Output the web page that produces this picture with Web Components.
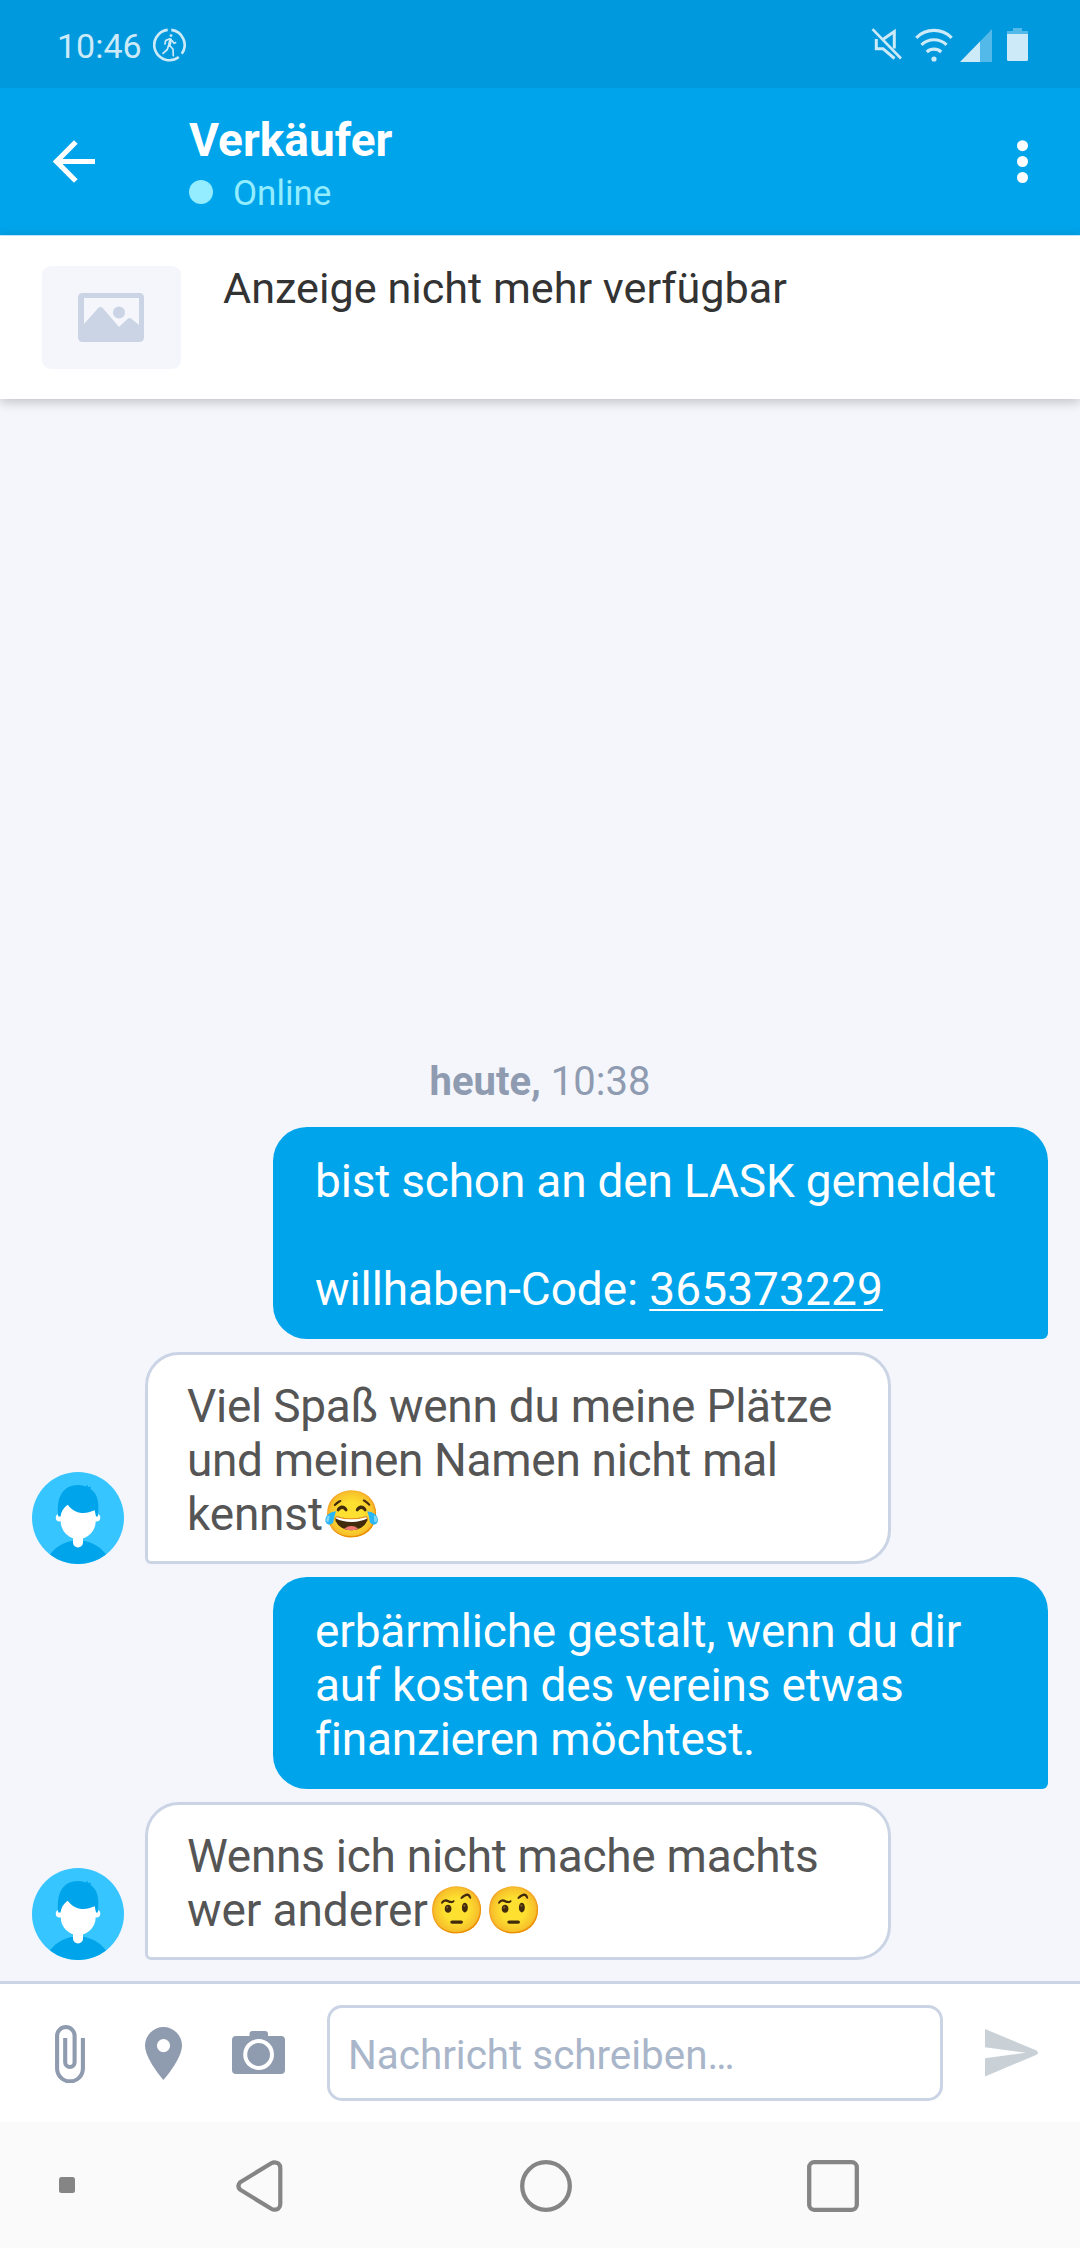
<!DOCTYPE html>
<html lang="de">
<head>
<meta charset="utf-8">
<title>Verkäufer</title>
<style>
html,body{margin:0;padding:0}
body{width:1080px;height:2248px;overflow:hidden;font-family:Roboto,"Noto Sans",sans-serif;background:#f4f6fc}
</style>
</head>
<body>
<chat-screen></chat-screen>
<script>
const define = (name, html) => customElements.define(name, class extends HTMLElement {
  constructor() {
    super();
    const t = document.createElement('template');
    t.innerHTML = '<style>*{box-sizing:border-box}svg{display:block;flex:none}</style>' + html;
    this.attachShadow({mode: 'open'}).append(t.content.cloneNode(true));
  }
});

define('status-bar', `
<style>
:host{display:flex;align-items:flex-start;height:88px;flex:none;background:#0099dd;color:#cceaf8;padding:0 52px 0 57px;box-sizing:border-box}
.time{font-size:34px;line-height:40px;padding-top:26px;width:96px}
.icons{display:flex;margin-left:auto;padding-top:28px}
.run{margin-top:28px}
</style>
<span class="time">10:46</span>
<svg class="run" width="33" height="34" viewBox="0 0 33 34" fill="none" stroke="#cceaf8">
<path stroke-width="2.6" d="M18.3 1.9A15.2 15.2 0 0 1 28.8 25.8M25.8 29A15.2 15.2 0 1 1 14.7 1.9"/>
<circle cx="18" cy="7.6" r="1.4" fill="#cceaf8" stroke="none"/>
<path stroke-width="1.7" stroke-linejoin="round" stroke-linecap="round" d="M16.7 10.8L12.6 12.6L12 16M19.2 12.8L21 15.3L22.6 14.6M15.4 18L14.3 21.5L10 25.4M17 17.8L20 21.3L20.3 27.7"/>
<path stroke-width="3" stroke-linecap="round" d="M17.6 11.8L16.2 17.5"/>
</svg>
<div class="icons">
<svg width="33" height="34" viewBox="0 0 33 34" fill="none" stroke="#cceaf8">
<path stroke-width="2.600" d="M1.500 1.200L30 30.500"/><path stroke-width="3" d="M5.300 11V20.700H12L23.500 30.500M12.500 11L23.300 3.500V20.500"/>
</svg>
<svg style="margin-left:11px" width="38" height="34" viewBox="0 0 38 34" fill="none" stroke="#cceaf8" stroke-width="3.200">
<path d="M1.300 9.800A25 25 0 0 1 36.700 9.800M6.500 16.800A18 18 0 0 1 31.500 16.800M11.800 24A10.500 10.500 0 0 1 26.200 24"/><circle cx="19" cy="31" r="2.600" fill="#cceaf8" stroke="none"/>
</svg>
<svg style="margin-left:7px" width="32" height="34" viewBox="0 0 32 34"><path fill="#52b9e8" d="M32 1V34.500H0z"/><path fill="#cceaf8" d="M20 13.500V34H0z"/></svg>
<svg style="margin-left:15px" width="21" height="34" viewBox="0 0 21 34"><path fill="#52b9e8" d="M6 0H15V3H21V6H0V3H6z"/><path fill="#cceaf8" d="M0 6H21V31.500Q21 33 19.500 33H1.500Q0 33 0 31.500z"/></svg>
</div>`);

define('app-bar', `
<style>
:host{display:flex;height:147px;flex:none;background:#00a4eb;color:#fff;padding:0 52px 0 53px;box-sizing:border-box}
.back{margin-top:52px}
.who{margin-left:94px;padding-top:25px}
.name{font-size:46px;line-height:54px;font-weight:700;white-space:nowrap}
.state{display:flex;align-items:center;gap:20px;font-size:35px;line-height:42px;color:#93edff;margin-top:6px}
.dot{width:24px;height:24px;border-radius:50%;background:#93edff;margin-top:-4px}
.more{margin:52px 0 0 auto}
</style>
<svg class="back" width="42" height="43" viewBox="0 0 42 43" fill="none" stroke="#fff" stroke-width="5.200"><path d="M42 21.500H5M22.800 2L3.500 21.500L22.800 41"/></svg>
<div class="who"><div class="name"><slot name="name"></slot></div><div class="state"><span class="dot"></span><slot name="state"></slot></div></div>
<svg class="more" width="11" height="44" viewBox="0 0 11 44" fill="#fff"><circle cx="5.500" cy="5.700" r="5.500"/><circle cx="5.500" cy="21.500" r="5.500"/><circle cx="5.500" cy="37.500" r="5.500"/></svg>`);

define('ad-card', `
<style>
:host{display:flex;height:164px;flex:none;background:#fff;border-top:1px solid #b8e5fa;padding:30px 42px 0;gap:42px;box-sizing:border-box;box-shadow:0 3px 11px rgba(0,0,0,.22);position:relative}
.thumb{width:139px;height:103px;border-radius:9px;background:#f4f6fc;display:flex;align-items:center;justify-content:center;padding-right:1px}
.t{font-size:43.200px;line-height:46px;color:#333;white-space:nowrap}
</style>
<div class="thumb"><svg width="66" height="49" viewBox="0 0 66 49"><rect width="66" height="49" rx="4.500" fill="#cad4e4"/><path fill="#f4f6fc" d="M6 5H61V32L53 25.500Q51.500 24.300 50 25.500L41 34L24.500 14.800Q22.500 13 20.500 14.800L6 31z"/><circle cx="41" cy="19.500" r="6" fill="#cad4e4"/></svg></div>
<div class="t"><slot></slot></div>`);

define('day-label', `
<style>:host{display:block;text-align:center;font-size:40px;line-height:46px;color:#8f9bb0;height:46px}</style>
<slot></slot>`);

define('user-avatar', `
<style>:host{display:block;width:92px;height:92px;flex:none}</style>
<svg width="92" height="92" viewBox="0 0 92 92">
<circle cx="46" cy="46" r="46" fill="#37c5ff"/>
<path fill="#00a4eb" d="M18 82.500C25 73 35 68.500 46 68.500S67 73 74 82.500A46 46 0 0 1 18 82.500z"/>
<path fill="#fff" d="M41 62H51V70.500A5 5 0 0 1 41 70.500z"/>
<circle cx="27.500" cy="45.800" r="3.700" fill="#fff"/><circle cx="64.600" cy="45.800" r="3.700" fill="#fff"/>
<path fill="#fff" d="M28.700 28H63.700V49A17.500 18 0 0 1 28.700 49z"/>
<path fill="#00a4eb" d="M26.300 44.500C24.500 29 28 13 46.500 13Q51 13 54 14.500L55.300 12.800L56 15L59 14.800L58.500 17C66 22 67.500 31 65.800 44.500H64L62.700 38.300C53 42.500 43 42.500 35.700 32.700Q29.500 37 28.500 44.500z"/>
</svg>`);

define('chat-message', `
<style>
:host{display:flex;align-items:flex-end;gap:21px;padding:0 32px;box-sizing:border-box;font-size:46px;line-height:54px}
.b{width:746px;background:#fff;border:3px solid #cad4e4;border-radius:34px 34px 34px 6px;padding:24px 39px 20px;color:#555;white-space:nowrap}
user-avatar{display:block}
:host([own]){justify-content:flex-end}
:host([own]) .b{width:775px;background:#00a4eb;border:0;padding:27px 42px 23px;border-radius:34px 34px 6px 34px;color:#fff}
:host([own]) user-avatar{display:none}
</style>
<user-avatar></user-avatar><div class="b"><slot></slot></div>`);

define('message-line', `
<style>
:host{display:block;height:54px}
::slotted(u){text-decoration-thickness:2px;text-underline-offset:4px;letter-spacing:.1px}
</style><slot></slot>`);

define('message-composer', `
<style>
:host{display:flex;align-items:center;height:141px;flex:none;background:#fff;border-top:3px solid #cad4e4;padding:0 42px 0 55px;box-sizing:border-box}
.clip{margin-bottom:-1px}.pin{margin-left:60px}.cam{margin-left:50px;margin-top:-1px}
.field{width:616px;height:96px;margin-left:42px;border:3px solid #cad4e4;border-radius:15px;font-size:40.400px;line-height:90px;color:#a9b5c9;padding-left:18px;padding-top:3px;overflow:hidden;white-space:nowrap}
.send{margin-left:42px}
</style>
<svg class="clip" width="30" height="58" viewBox="0 0 30 58" fill="none" stroke="#8f9bae" stroke-width="4.100"><path d="M27.900 13V43.500A12.500 12.500 0 0 1 2.100 43.500V10.800A8.750 8.750 0 0 1 19.600 10.800V37.300A4.700 4.700 0 0 1 10.200 37.300V13"/></svg>
<svg class="pin" width="37" height="53" viewBox="0 0 37 53"><path fill="#8f9bae" fill-rule="evenodd" d="M18.500 0A18.500 18.500 0 0 0 0 18.500C0 32 18.500 53 18.500 53S37 32 37 18.500A18.500 18.500 0 0 0 18.500 0zM18.500 12A6.600 6.600 0 1 1 18.500 25.200A6.600 6.600 0 0 1 18.500 12z"/></svg>
<svg class="cam" width="53" height="43" viewBox="0 0 53 43"><path fill="#8f9bae" d="M4 5H17.500V3Q17.500 0 20.500 0H33Q36 0 36 3V5H49Q53 5 53 9V39Q53 43 49 43H4Q0 43 0 39V9Q0 5 4 5z"/><circle cx="26.600" cy="23.500" r="13.400" fill="none" stroke="#fff" stroke-width="4"/></svg>
<div class="field">Nachricht schreiben…</div>
<svg class="send" width="53" height="48" viewBox="0 0 53 48"><path fill="#c9d1d7" d="M0 0L51 21.300Q55 23.700 51 26L0 47.500V29.200L41 23.700L0 18.300z"/></svg>`);

define('nav-bar', `
<style>
:host{display:flex;align-items:center;height:126px;flex:none;background:#fafafa;padding:2px 0 0 59px;box-sizing:border-box}
</style>
<svg width="16" height="16" style="margin-top:-2px"><rect width="16" height="16" rx="2.500" fill="#858585"/></svg>
<svg width="47" height="52" viewBox="0 0 47 52" style="margin-left:161px" fill="none" stroke="#858585" stroke-width="4.200"><path d="M4.200 22.300L35.300 3.200Q38.800 1.200 42.500 3.600Q44.300 5.200 44.300 8V44Q44.300 46.800 42.500 48.400Q38.800 50.800 35.300 48.800L4.200 29.700Q.6 26 4.200 22.300z"/></svg>
<svg width="52" height="52" style="margin-left:237px" fill="none" stroke="#858585" stroke-width="4.300"><circle cx="26" cy="26" r="23.800"/></svg>
<svg width="52" height="52" style="margin-left:235px" fill="none" stroke="#858585" stroke-width="4.300"><rect x="2.200" y="2.200" width="47.600" height="47.600" rx="5"/></svg>`);

define('chat-screen', `
<style>
:host{display:flex;flex-direction:column;width:1080px;height:2248px}
.log{flex:1;display:flex;flex-direction:column;justify-content:flex-end;gap:13px;padding-bottom:21px;background:#f4f6fc}
day-label{margin-bottom:9px}
</style>
<status-bar></status-bar>
<app-bar><span slot="name">Verkäufer</span><span slot="state">Online</span></app-bar>
<ad-card>Anzeige nicht mehr verfügbar</ad-card>
<div class="log">
<day-label><b>heute,</b> 10:38</day-label>
<chat-message own>
<message-line style="letter-spacing:-.19px">bist schon an den LASK gemeldet</message-line>
<message-line></message-line>
<message-line style="letter-spacing:-.1px">willhaben-Code: <u>365373229</u></message-line>
</chat-message>
<chat-message>
<message-line style="letter-spacing:-.25px">Viel Spaß wenn du meine Plätze</message-line>
<message-line style="letter-spacing:-.32px">und meinen Namen nicht mal</message-line>
<message-line style="letter-spacing:-.18px">kennst😂</message-line>
</chat-message>
<chat-message own>
<message-line style="letter-spacing:-.17px">erbärmliche gestalt, wenn du dir</message-line>
<message-line style="letter-spacing:-.17px">auf kosten des vereins etwas</message-line>
<message-line style="letter-spacing:-.2px">finanzieren möchtest.</message-line>
</chat-message>
<chat-message>
<message-line style="letter-spacing:-.27px">Wenns ich nicht mache machts</message-line>
<message-line style="letter-spacing:-.1px">wer anderer🤨🤨</message-line>
</chat-message>
</div>
<message-composer></message-composer>
<nav-bar></nav-bar>`);
</script>
</body>
</html>
